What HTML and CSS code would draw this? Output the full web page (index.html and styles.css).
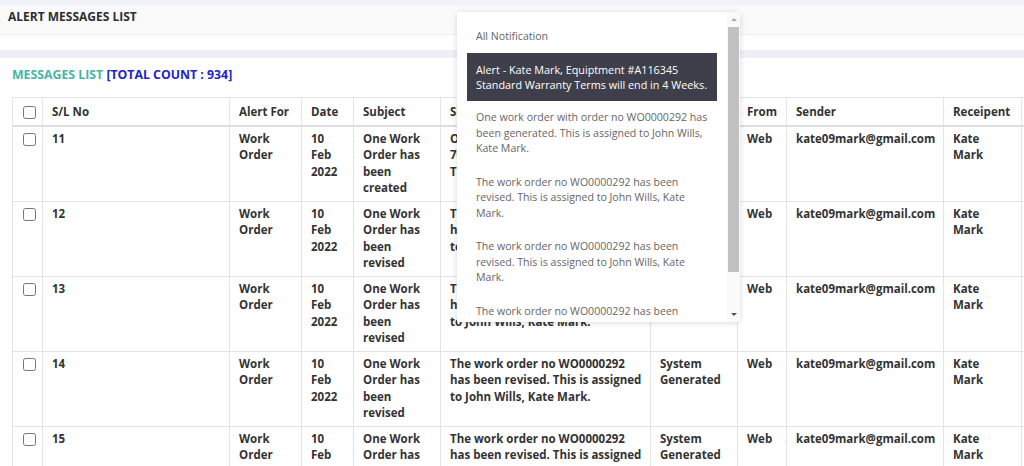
FILE: index.html
```html
<!DOCTYPE html>
<html lang="en">
<head>
    <meta charset="UTF-8">
    <meta name="viewport" content="width=device-width, initial-scale=1.0">
    <title>Alert Messages List</title>
    <link rel="stylesheet" href="styles.css">
</head>
<body>
    <div class="top-strip"></div>
    <div class="page-title">ALERT MESSAGES LIST</div>
    <div class="title-gap"></div>
    <div class="band"></div>

    <div class="content">
        <h2 class="list-title">MESSAGES LIST <span class="count">[TOTAL COUNT : 934]</span></h2>

        <table class="msg-table">
            <colgroup>
                <col style="width:30px">
                <col style="width:187px">
                <col style="width:72px">
                <col style="width:52px">
                <col style="width:87px">
                <col style="width:210px">
                <col style="width:87px">
                <col style="width:49px">
                <col style="width:157px">
                <col style="width:78px">
                <col style="width:90px">
            </colgroup>
            <thead>
                <tr>
                    <th class="check"><input type="checkbox"></th>
                    <th>S/L No</th>
                    <th>Alert For</th>
                    <th>Date</th>
                    <th>Subject</th>
                    <th class="msg">Short Message</th>
                    <th>Type</th>
                    <th>From</th>
                    <th>Sender</th>
                    <th>Receipent</th>
                    <th></th>
                </tr>
            </thead>
            <tbody>
                <tr>
                    <td class="check"><input type="checkbox"></td>
                    <td>11</td>
                    <td>Work Order</td>
                    <td>10 Feb 2022</td>
                    <td>One Work Order has been created</td>
                    <td class="msg">One work order with order no 7000000292 has been generated. This is assigned to Kate Mark.</td>
                    <td>System Generated</td>
                    <td>Web</td>
                    <td>kate09mark@gmail.com</td>
                    <td>Kate Mark</td>
                    <td></td>
                </tr>
                <tr>
                    <td class="check"><input type="checkbox"></td>
                    <td>12</td>
                    <td>Work Order</td>
                    <td>10 Feb 2022</td>
                    <td>One Work Order has been revised</td>
                    <td class="msg">The work order no WO0000292 has been revised. This is assigned to John Wills, Kate Mark.</td>
                    <td>System Generated</td>
                    <td>Web</td>
                    <td>kate09mark@gmail.com</td>
                    <td>Kate Mark</td>
                    <td></td>
                </tr>
                <tr>
                    <td class="check"><input type="checkbox"></td>
                    <td>13</td>
                    <td>Work Order</td>
                    <td>10 Feb 2022</td>
                    <td>One Work Order has been revised</td>
                    <td class="msg">The work order no WO0000292 has been revised. This is assigned to John Wills, Kate Mark.</td>
                    <td>System Generated</td>
                    <td>Web</td>
                    <td>kate09mark@gmail.com</td>
                    <td>Kate Mark</td>
                    <td></td>
                </tr>
                <tr>
                    <td class="check"><input type="checkbox"></td>
                    <td>14</td>
                    <td>Work Order</td>
                    <td>10 Feb 2022</td>
                    <td>One Work Order has been revised</td>
                    <td class="msg">The work order no WO0000292 has been revised. This is assigned to John Wills, Kate Mark.</td>
                    <td>System Generated</td>
                    <td>Web</td>
                    <td>kate09mark@gmail.com</td>
                    <td>Kate Mark</td>
                    <td></td>
                </tr>
                <tr>
                    <td class="check"><input type="checkbox"></td>
                    <td>15</td>
                    <td>Work Order</td>
                    <td>10 Feb 2022</td>
                    <td>One Work Order has been revised</td>
                    <td class="msg">The work order no WO0000292 has been revised. This is assigned to John Wills, Kate Mark.</td>
                    <td>System Generated</td>
                    <td>Web</td>
                    <td>kate09mark@gmail.com</td>
                    <td>Kate Mark</td>
                    <td></td>
                </tr>
            </tbody>
        </table>
    </div>

    <!-- notification dropdown -->
    <div class="notify">
        <div class="notify-list">
            <div class="notify-head">All Notification</div>
            <div class="notify-item active">Alert - Kate Mark, Equiptment #A116345 Standard Warranty Terms will end in 4 Weeks.</div>
            <div class="notify-item">One work order with order no WO0000292 has been generated. This is assigned to John Wills, Kate Mark.</div>
            <div class="notify-item">The work order no WO0000292 has been revised. This is assigned to John Wills, Kate Mark.</div>
            <div class="notify-item">The work order no WO0000292 has been revised. This is assigned to John Wills, Kate Mark.</div>
            <div class="notify-item">The work order no WO0000292 has been revised. This is assigned to John Wills, Kate Mark.</div>
        </div>
        <div class="notify-scroll">
            <span class="arrow up"></span>
            <div class="track"><div class="thumb"></div></div>
            <span class="arrow down"></span>
        </div>
    </div>
</body>
</html>
```

FILE: styles.css
```css
/* Page */
body {
    margin: 0;
    font-family: 'Open Sans', 'Liberation Sans', sans-serif;
    font-size: 12px;
    color: #333;
    background: #fff;
    overflow: hidden;
}

.top-strip {
    height: 5px;
    background: #f2f3f8;
}

.page-title {
    height: 30px;
    line-height: 24px;
    padding: 0 8px;
    background: #fafafa;
    border-bottom: 1px solid #f0f0f0;
    font-weight: 700;
    font-size: 12px;
    color: #2e2e2e;
    box-sizing: border-box;
}

.title-gap {
    height: 15px;
}

.band {
    height: 8px;
    background: #eef0f5;
}

.content {
    padding: 0 12px;
}

.list-title {
    margin: 0;
    padding-top: 9px;
    height: 30px;
    line-height: 16px;
    font-size: 12.3px;
    font-weight: 700;
    color: #45b5a6;
}

.count {
    color: #2222cc;
}

/* Table */
.msg-table {
    border-collapse: collapse;
    table-layout: fixed;
    width: 1099px;
}

.msg-table th,
.msg-table td {
    border: 1px solid #e4e4e4;
    padding: 4px 9px;
    font-size: 11.5px;
    line-height: 16.5px;
    font-weight: 700;
    text-align: left;
    vertical-align: top;
    color: #333;
}

.msg-table th {
    padding: 6px 9px 4px;
    border-bottom: 2px solid #dedede;
}

.msg-table .msg {
    padding-right: 5px;
}

.msg-table .check {
    padding-left: 10px;
    padding-right: 0;
}

.check input {
    margin: 2px 0 0;
    width: 13px;
    height: 13px;
    vertical-align: top;
}

/* Notification dropdown */
.notify {
    position: absolute;
    left: 457px;
    top: 12px;
    width: 283px;
    height: 310px;
    background: #fff;
    box-shadow: 0 1px 6px rgba(0, 0, 0, 0.15);
    display: flex;
    font-size: 10.6px;
    font-weight: 400;
    color: #666;
}

.notify-list {
    flex: 1;
    overflow: hidden;
    padding: 17px 10px 0 10px;
}

.notify-head {
    padding: 0 9px;
    line-height: 15px;
    margin-bottom: 9px;
}

.notify-item {
    padding: 9px 9px;
    line-height: 15.5px;
}

.notify-item.active {
    background: #3e3f4a;
    color: #fff;
    font-size: 10.8px;
    line-height: 15px;
}

.notify-scroll {
    width: 13px;
    display: flex;
    flex-direction: column;
    align-items: center;
    background: #fafafa;
}

.arrow {
    width: 0;
    height: 0;
    border-left: 3px solid transparent;
    border-right: 3px solid transparent;
    margin: 6px 0;
}

.arrow.up {
    border-bottom: 3px solid #a8a8a8;
}

.arrow.down {
    border-top: 3px solid #505050;
}

.track {
    flex: 1;
    width: 100%;
}

.thumb {
    width: 11px;
    margin: 0 auto;
    height: 245px;
    background: #c1c1c1;
}
```
